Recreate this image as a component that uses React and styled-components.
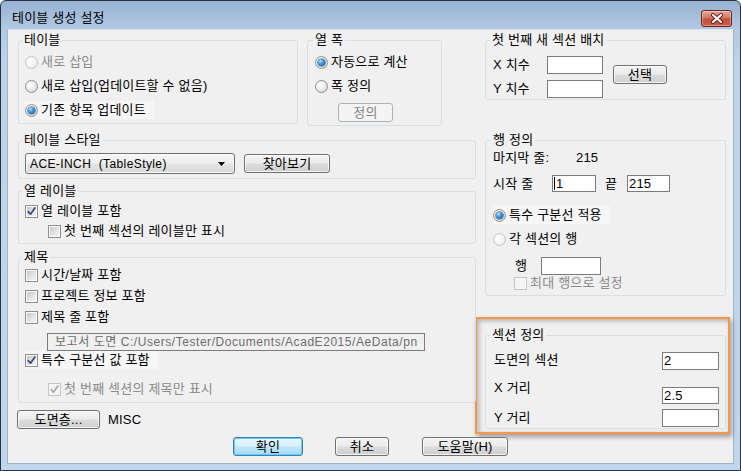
import React from "react";
import styled, { createGlobalStyle, css } from "styled-components";

const GlobalStyle = createGlobalStyle`
  html, body { margin: 0; padding: 0; background: #ffffff; }
  body { font-family: "Liberation Sans", "Noto Sans CJK KR", sans-serif; }
`;

const Window = styled.div`
  width: 741px;
  height: 471px;
  box-sizing: border-box;
  border: 1px solid #27343f;
  border-radius: 6px 6px 0 0;
  background: linear-gradient(#97b1d1 0px, #b1c9e3 28px, #bdd3ea 60px, #c0d6ec 100%);
  display: flex;
  flex-direction: column;
  overflow: hidden;
  font-family: "Liberation Sans", "Noto Sans CJK KR", sans-serif;
  font-size: 13px;
  letter-spacing: 0.2px;
  color: #000;
`;

const TitleBar = styled.div`
  height: 28px;
  flex: none;
  display: flex;
  align-items: flex-start;
  justify-content: space-between;
`;

const Title = styled.span`
  margin: 9px 0 0 11px;
  line-height: 16px;
`;

const CloseBtn = styled.div`
  width: 31px;
  height: 17px;
  margin: 9px 8px 0 0;
  box-sizing: border-box;
  border: 1px solid #6a241b;
  border-radius: 3px;
  background: linear-gradient(#e9a897 0%, #d57a66 42%, #c44d36 55%, #cf5d42 100%);
  box-shadow: inset 0 0 0 1px rgba(255, 255, 255, 0.35);
  display: flex;
  align-items: center;
  justify-content: center;
`;

const Body = styled.div`
  flex: 1;
  margin: 0 6px 6px;
  box-sizing: border-box;
  background: #f0f0f0;
  border: 1px solid #9fb3ca;
  border-top-color: #d9e4ef;
  padding: 10px 7px 0 10px;
  display: flex;
  flex-direction: column;
`;

const Main = styled.div`
  display: grid;
  grid-template-columns: 458px 241px;
  column-gap: 9px;
  align-items: start;
`;

const Column = styled.div`
  display: flex;
  flex-direction: column;
`;

const Row = styled.div`
  display: flex;
  align-items: ${({ $align = "center" }) => $align};
  margin: ${({ $m = "0" }) => $m};
  height: ${({ $h }) => ($h ? `${$h}px` : "auto")};
  flex: none;
`;

const Group = styled.div`
  position: relative;
  box-sizing: border-box;
  border: 1px solid #d5dfe5;
  border-radius: 3px;
  width: ${({ $w }) => ($w ? `${$w}px` : "auto")};
  height: ${({ $h }) => $h}px;
  margin: ${({ $m = "0" }) => $m};
  padding: ${({ $pad = "0" }) => $pad};
  display: flex;
  flex-direction: column;
  align-items: flex-start;
  gap: ${({ $gap = 0 }) => $gap}px;
  flex: none;
`;

const Caption = styled.span`
  position: absolute;
  top: -9px;
  left: ${({ $x = 3 }) => $x}px;
  padding: 0 2px;
  line-height: 16px;
  background: #f0f0f0;
  white-space: nowrap;
`;

const Option = styled.div`
  display: flex;
  align-items: center;
  gap: ${({ $gap = 3 }) => $gap}px;
  height: ${({ $h = 18 }) => $h}px;
  margin: ${({ $m = "0" }) => $m};
  padding-right: ${({ $hl }) => ($hl ? "8px" : "0")};
  background: ${({ $hl }) => ($hl ? "#f6f6f6" : "transparent")};
  color: ${({ $dim }) => ($dim ? "#8a8a8a" : "#000")};
  line-height: 16px;
  white-space: nowrap;
  flex: none;
`;

const Radio = styled.span`
  position: relative;
  width: 13px;
  height: 13px;
  box-sizing: border-box;
  border-radius: 50%;
  flex: none;
  border: 1px solid ${({ $dim }) => ($dim ? "#c3c5c7" : "#8e8f8f")};
  background: ${({ $dim }) =>
    $dim
      ? "radial-gradient(circle at 35% 35%, #ffffff 0%, #f4f4f4 50%, #e3e3e3 100%)"
      : "radial-gradient(circle at 35% 35%, #ffffff 0%, #eeeeee 45%, #c9cacb 100%)"};
  ${({ $on }) =>
    $on &&
    css`
      &::after {
        content: "";
        position: absolute;
        left: 2px;
        top: 2px;
        width: 7px;
        height: 7px;
        border-radius: 50%;
        background: radial-gradient(circle at 35% 30%, #b6e4ff 0%, #3a9ae4 40%, #0c4f92 100%);
        box-shadow: 0 0 0 0.6px #1a4f86;
      }
    `}
`;

const Box = styled.span`
  width: 13px;
  height: 13px;
  box-sizing: border-box;
  flex: none;
  display: flex;
  align-items: center;
  justify-content: center;
  border: 1px solid ${({ $dim }) => ($dim ? "#c2c4c6" : "#8f8f8f")};
  background: ${({ $dim }) =>
    $dim ? "#f4f4f4" : "linear-gradient(135deg, #bcc0c5 0%, #e6e7e8 60%, #f6f6f6 100%)"};
  box-shadow: inset 0 0 0 1px ${({ $dim }) => ($dim ? "#f7f7f7" : "#fbfbfb")};
`;

const Check = ({ dim, on }) => (
  <Box $dim={dim}>
    {on && (
      <svg width="9" height="9" viewBox="0 0 9 9">
        <path
          d="M1.2 4.6 L3.5 7.2 L7.9 1"
          fill="none"
          stroke={dim ? "#a9a9a9" : "#33488f"}
          strokeWidth="1.7"
          strokeLinecap="round"
          strokeLinejoin="round"
        />
      </svg>
    )}
  </Box>
);

const Label = styled.span`
  width: ${({ $w }) => ($w ? `${$w}px` : "auto")};
  margin: ${({ $m = "0" }) => $m};
  line-height: 16px;
  white-space: nowrap;
  flex: none;
`;

const Field = styled.div`
  box-sizing: border-box;
  width: ${({ $w }) => $w}px;
  height: ${({ $h = 18 }) => $h}px;
  margin: ${({ $m = "0" }) => $m};
  border: 1px solid #7b7b7b;
  background: ${({ $ro }) => ($ro ? "#f0f0f0" : "#ffffff")};
  color: ${({ $ro }) => ($ro ? "#6d6d6d" : "#000")};
  padding-left: ${({ $pl = 1 }) => $pl}px;
  display: flex;
  align-items: center;
  line-height: 14px;
  white-space: nowrap;
  overflow: hidden;
  flex: none;
`;

const PathField = styled(Field)`
  font-size: 12px;
  letter-spacing: 0.55px;
`;

const Caret = styled.span`
  width: 1px;
  height: 13px;
  background: #000;
  margin-right: 1px;
  flex: none;
`;

const Btn = styled.button`
  box-sizing: border-box;
  width: ${({ $w }) => $w}px;
  height: ${({ $h = 19 }) => $h}px;
  margin: ${({ $m = "0" }) => $m};
  padding: 0;
  font: inherit;
  letter-spacing: inherit;
  line-height: 15px;
  color: #000;
  border: 1px solid #707070;
  border-radius: 3px;
  background: linear-gradient(#f3f3f3 0%, #ebebeb 48%, #dcdcdc 52%, #cfcfcf 100%);
  box-shadow: inset 0 0 0 1px rgba(255, 255, 255, 0.75);
  flex: none;
  ${({ $primary }) =>
    $primary &&
    css`
      border-color: #3c7fb1;
      background: linear-gradient(#eaf6fd 0%, #d9f0fc 48%, #bee6fd 52%, #a7d9f5 100%);
      box-shadow: inset 0 0 0 1px #60cefa;
    `}
  ${({ $off }) =>
    $off &&
    css`
      border-color: #adb2b5;
      background: #f4f4f4;
      color: #838383;
      box-shadow: none;
    `}
`;

const Combo = styled.div`
  box-sizing: border-box;
  width: 210px;
  height: 21px;
  border: 1px solid #707070;
  border-radius: 3px;
  background: linear-gradient(#f6f6f6 0%, #efefef 48%, #e4e4e4 52%, #dadada 100%);
  box-shadow: inset 0 0 0 1px rgba(255, 255, 255, 0.8);
  display: flex;
  align-items: center;
  justify-content: space-between;
  padding: 0 9px 0 4px;
  font-size: 12px;
  letter-spacing: 0.4px;
  line-height: 16px;
  white-space: pre;
  flex: none;
`;

const Highlight = styled.div`
  box-sizing: border-box;
  height: 117px;
  margin: 21px -4px 0 -10px;
  border: 2px solid #f79646;
  padding: 16px 2px 0 8px;
  box-shadow: 2px 3px 5px rgba(0, 0, 0, 0.35), inset 2px 2px 5px rgba(0, 0, 0, 0.25);
`;

const ButtonBar = styled.div`
  display: flex;
  align-items: center;
  margin-top: 3px;
  padding-left: 215px;
`;

export default function App() {
  return (
    <>
      <GlobalStyle />
      <Window>
        <TitleBar>
          <Title>테이블 생성 설정</Title>
          <CloseBtn>
            <svg width="14" height="11" viewBox="0 0 14 11">
              <path d="M3 2 L11 9 M11 2 L3 9" stroke="#5a2218" strokeWidth="4" strokeLinecap="round" />
              <path d="M3 2 L11 9 M11 2 L3 9" stroke="#ffffff" strokeWidth="2.2" strokeLinecap="round" />
            </svg>
          </CloseBtn>
        </TitleBar>
        <Body>
          <Main>
            <Column>
              <Row $align="flex-start">
                <Group $w={280} $h={84} $pad="12px 0 0 6px" $gap={6}>
                  <Caption>테이블</Caption>
                  <Option $dim>
                    <Radio $dim />
                    새로 삽입
                  </Option>
                  <Option>
                    <Radio />
                    새로 삽입(업데이트할 수 없음)
                  </Option>
                  <Option $hl>
                    <Radio $on />
                    기존 항목 업데이트
                  </Option>
                </Group>
                <Group $w={135} $h={86} $m="0 0 0 9px" $pad="12px 0 0 7px" $gap={6}>
                  <Caption $x={5}>열 폭</Caption>
                  <Option>
                    <Radio $on />
                    자동으로 계산
                  </Option>
                  <Option>
                    <Radio />폭 정의
                  </Option>
                  <Btn $w={55} $off $m="2px 0 0 23px">
                    정의
                  </Btn>
                </Group>
              </Row>

              <Group $h={39} $m="14px 0 0" $pad="12px 0 0 6px">
                <Caption>테이블 스타일</Caption>
                <Row>
                  <Combo>
                    <span>ACE-INCH  (TableStyle)</span>
                    <svg width="7" height="4" viewBox="0 0 7 4">
                      <polygon points="0,0 7,0 3.5,4" fill="#000" />
                    </svg>
                  </Combo>
                  <Btn $w={86} $m="0 0 0 9px">
                    찾아보기
                  </Btn>
                </Row>
              </Group>

              <Group $h={53} $m="12px 0 0" $pad="10px 0 0 6px" $gap={2}>
                <Caption>열 레이블</Caption>
                <Option $gap={3}>
                  <Check on />열 레이블 포함
                </Option>
                <Option $gap={3} $m="0 0 0 23px">
                  <Check />첫 번째 섹션의 레이블만 표시
                </Option>
              </Group>

              <Group $h={146} $m="13px 0 0" $pad="8px 0 0 6px">
                <Caption>제목</Caption>
                <Option>
                  <Check />시간/날짜 포함
                </Option>
                <Option $m="3px 0 0">
                  <Check />프로젝트 정보 포함
                </Option>
                <Option $m="3px 0 0">
                  <Check />제목 줄 포함
                </Option>
                <PathField $w={378} $ro $pl={7} $m="7px 0 0 22px">
                  보고서 도면 C:/Users/Tester/Documents/AcadE2015/AeData/pn
                </PathField>
                <Option $hl>
                  <Check on />특수 구분선 값 포함
                </Option>
                <Option $dim $m="11px 0 0 23px">
                  <Check dim on />첫 번째 섹션의 제목만 표시
                </Option>
              </Group>

              <Row $m="7px 0 0 -1px">
                <Btn $w={83}>도면층...</Btn>
                <Label $m="0 0 0 8px">MISC</Label>
              </Row>
            </Column>

            <Column>
              <Group $h={60} $pad="15px 0 0 7px">
                <Caption $x={4}>첫 번째 새 섹션 배치</Caption>
                <Row $align="flex-start">
                  <Column>
                    <Row $h={18}>
                      <Label $w={54}>X 치수</Label>
                      <Field $w={56} />
                    </Row>
                    <Row $h={18} $m="6px 0 0">
                      <Label $w={54}>Y 치수</Label>
                      <Field $w={56} />
                    </Row>
                  </Column>
                  <Btn $w={54} $m="9px 0 0 10px">
                    선택
                  </Btn>
                </Row>
              </Group>

              <Group $h={156} $m="40px 0 0" $pad="9px 0 0 7px">
                <Caption $x={5}>행 정의</Caption>
                <Row $h={16}>
                  <Label $w={83}>마지막 줄:</Label>
                  <Label>215</Label>
                </Row>
                <Row $h={17} $m="9px 0 0">
                  <Label $w={59}>시작 줄</Label>
                  <Field $w={44} $h={17}>
                    <Caret />1
                  </Field>
                  <Label $w={22} $m="0 0 0 9px">
                    끝
                  </Label>
                  <Field $w={43} $h={17}>
                    215
                  </Field>
                </Row>
                <Option $hl $m="14px 0 0">
                  <Radio $on />
                  특수 구분선 적용
                </Option>
                <Option $m="6px 0 0">
                  <Radio $dim />각 섹션의 행
                </Option>
                <Row $h={18} $m="9px 0 0 22px">
                  <Label $w={26}>행</Label>
                  <Field $w={60} />
                </Row>
                <Option $dim $h={16} $m="0 0 0 21px">
                  <Check dim />최대 행으로 설정
                </Option>
              </Group>

              <Highlight>
                <Group $h={94} $pad="16px 0 0 8px">
                  <Caption $x={4}>섹션 정의</Caption>
                  <Row $align="flex-start">
                    <Label $w={168}>도면의 섹션</Label>
                    <Field $w={57}>2</Field>
                  </Row>
                  <Row $align="flex-start" $m="10px 0 0">
                    <Label $w={168}>X 거리</Label>
                    <Field $w={57} $h={17} $m="7px 0 0">
                      2.5
                    </Field>
                  </Row>
                  <Row $m="5px 0 0">
                    <Label $w={168}>Y 거리</Label>
                    <Field $w={57} />
                  </Row>
                </Group>
              </Highlight>
            </Column>
          </Main>

          <ButtonBar>
            <Btn $w={70} $primary>
              확인
            </Btn>
            <Btn $w={54} $m="0 0 0 32px">
              취소
            </Btn>
            <Btn $w={86} $m="0 0 0 33px">
              도움말(H)
            </Btn>
          </ButtonBar>
        </Body>
      </Window>
    </>
  );
}
